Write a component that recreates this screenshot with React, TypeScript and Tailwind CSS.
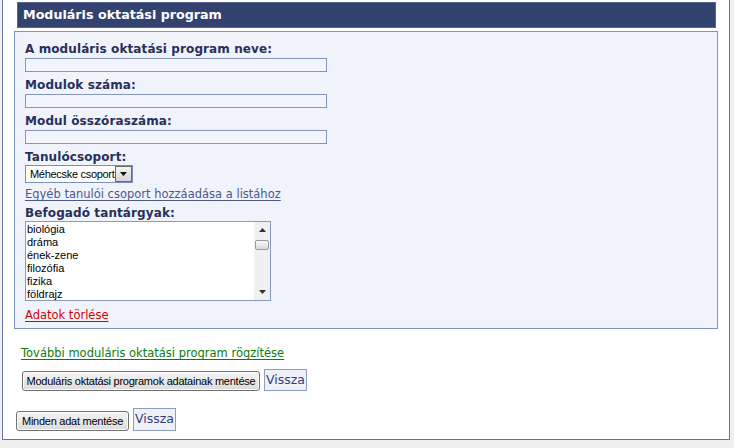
import React from "react";

const labelCls = "text-[12px] font-bold text-[#27305c] leading-[16px] tracking-[0.1px]";
const inputCls = "block w-[302px] h-[14px] border border-[#8596bd] bg-[#f2f5fb]";

function Btn({ children, w }: { children: React.ReactNode; w: string }) {
  return (
    <div
      className={`${w} h-[20px] flex items-center justify-center whitespace-nowrap rounded-[3px] border border-[#707070] bg-gradient-to-b from-[#f4f4f4] to-[#dcdcdc] text-[11px] tracking-[-0.25px] text-black font-['Liberation_Sans',sans-serif] shadow-[inset_0_0_0_1px_#fbfbfb]`}
    >
      {children}
    </div>
  );
}

function Vissza({ h }: { h: string }) {
  return (
    <div className={`w-[43px] ${h} flex items-center justify-center border border-[#8d9dc4] bg-[#eef1f7] text-[12.5px] text-[#34407a]`}>
      Vissza
    </div>
  );
}

export default function App() {
  const items = ["biológia", "dráma", "ének-zene", "filozófia", "fizika", "földrajz"];
  return (
    <div className="w-[734px] h-[448px] bg-[#f0f0f0] font-['DejaVu_Sans',sans-serif] overflow-hidden">
      <div className="ml-[2px] w-[728px] h-[440px] bg-white border-x border-b border-[#68729f] pt-[2px]">
        <div className="ml-[14px] w-[699px] h-[26px] bg-[#344270] border border-[#56668f] flex items-center pl-[5px]">
          <span className="text-white text-[12.7px] font-bold">Moduláris oktatási program</span>
        </div>
        <div className="ml-[11px] mt-[3px] w-[704px] h-[298px] bg-[#f0f4fa] border border-[#7e93bb] pl-[10px] pt-[9px]">
          <div className={labelCls}>A moduláris oktatási program neve:</div>
          <div className={inputCls + " mt-[1px]"} />
          <div className={labelCls + " mt-[5px]"}>Modulok száma:</div>
          <div className={inputCls + " mt-[1px]"} />
          <div className={labelCls + " mt-[5px]"}>Modul összóraszáma:</div>
          <div className={inputCls + " mt-[1px]"} />
          <div className={labelCls + " mt-[5px]"}>Tanulócsoport:</div>
          <div className="mt-0 w-[108px] h-[18px] border border-[#7b8fbb] bg-white flex items-center">
            <span className="flex-1 pl-[4px] whitespace-nowrap text-[11px] tracking-[-0.3px] text-black font-['Liberation_Sans',sans-serif] leading-none">Méhecske csoport</span>
            <div className="w-[17px] h-[16px] border border-[#6a6a6a] bg-gradient-to-b from-[#f6f6f6] to-[#d4d4d4] flex items-center justify-center">
              <svg width="7" height="4" viewBox="0 0 7 4"><path d="M0 0H7L3.5 4Z" fill="#111" /></svg>
            </div>
          </div>
          <div className="mt-[3px] text-[11.5px] text-[#4d5889] underline underline-offset-2 leading-[16px]">Egyéb tanulói csoport hozzáadása a listához</div>
          <div className={labelCls + " mt-[3px]"}>Befogadó tantárgyak:</div>
          <div className="mt-[0px] w-[246px] h-[80px] border border-[#8a9bc0] bg-white flex">
            <div className="flex-1 pl-[1px] pt-[1px] font-['Liberation_Sans',sans-serif] text-[11px] text-black leading-[13px]">
              {items.map((t) => (
                <div key={t}>{t}</div>
              ))}
            </div>
            <div className="w-[16px] bg-[#f0f0f0] relative">
              <svg className="absolute left-[5px] top-[6px]" width="7" height="4" viewBox="0 0 7 4"><path d="M0 4H7L3.5 0Z" fill="#333" /></svg>
              <div className="absolute left-[1px] top-[18px] w-[14px] h-[10px] rounded-[2px] border border-[#9a9a9a] bg-gradient-to-b from-[#fafafa] to-[#d8d8d8]" />
              <svg className="absolute left-[5px] bottom-[6px]" width="7" height="4" viewBox="0 0 7 4"><path d="M0 0H7L3.5 4Z" fill="#333" /></svg>
            </div>
          </div>
          <div className="mt-[6px] text-[11.5px] text-[#d40000] underline underline-offset-2 leading-[16px]">Adatok törlése</div>
        </div>
        <div className="ml-[18px] mt-[16px] text-[11.5px] text-[#0c7a0c] underline underline-offset-2 leading-[16px]">További moduláris oktatási program rögzítése</div>
        <div className="ml-[19px] mt-[8px] flex items-end gap-[4px]">
          <Btn w="w-[238px]">Moduláris oktatási programok adatainak mentése</Btn>
          <Vissza h="h-[22px]" />
        </div>
        <div className="ml-[13px] mt-[17px] flex items-end gap-[4px]">
          <Btn w="w-[113px]">Minden adat mentése</Btn>
          <Vissza h="h-[23px]" />
        </div>
      </div>
    </div>
  );
}
